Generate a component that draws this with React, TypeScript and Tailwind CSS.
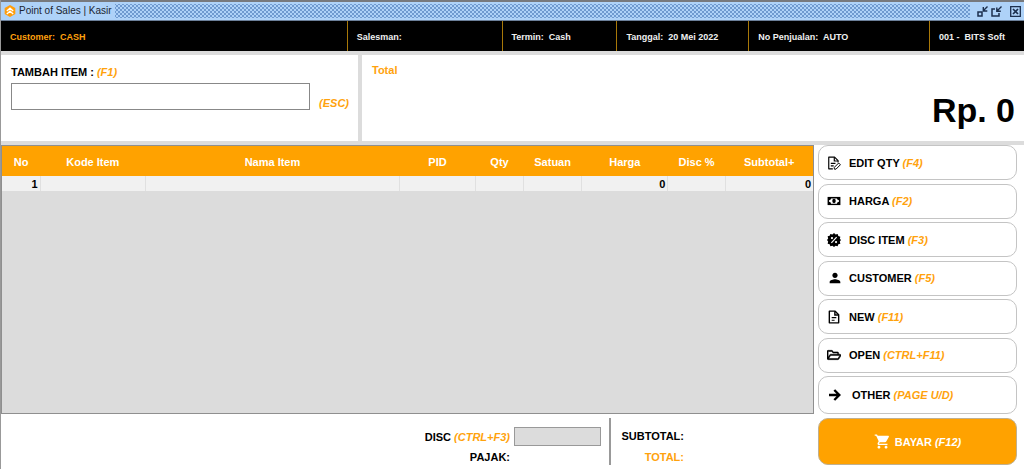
import React from "react";
import { FaRegFolderOpen } from "react-icons/fa";
import { MdPerson, MdShoppingCart } from "react-icons/md";

function FileLinesIcon() {
  return (
    <svg viewBox="0 0 24 24" className="size-[14px]" fill="none" stroke="currentColor" strokeWidth="2.400" aria-hidden="true">
      <path d="M14 2H4v20h16V8z" strokeLinejoin="round" />
      <path d="M13.500 2v6.500H20" />
      <path d="M8 13h8M8 17.500h5" strokeWidth="2" />
    </svg>
  );
}

function FileEditIcon() {
  return (
    <svg viewBox="0 0 24 24" className="size-[14px]" fill="none" stroke="currentColor" strokeWidth="2" aria-hidden="true">
      <path d="M10 22H3V2h10l6 6v3" strokeLinejoin="round" />
      <path d="M12.500 2v6.500H19" />
      <path d="M6.500 12.500h8M6.500 17h5" />
      <path d="M12.500 19.500l7.500-7.500 3 3-7.500 7.500h-3z" strokeWidth="1.700" />
    </svg>
  );
}

function CashIcon() {
  return (
    <svg viewBox="0 0 24 24" className="size-[14px]" aria-hidden="true">
      <rect x="1" y="5" width="22" height="14" fill="currentColor" />
      <path d="M7 7.500h10a3.500 3.500 0 0 0 3.500 3v3a3.500 3.500 0 0 0-3.500 3H7a3.500 3.500 0 0 0-3.500-3v-3A3.500 3.500 0 0 0 7 7.500z" fill="white" />
      <ellipse cx="12" cy="12" rx="3" ry="3.700" fill="currentColor" />
    </svg>
  );
}

function DiscountIcon() {
  return (
    <svg viewBox="0 0 24 24" className="size-[14px]" aria-hidden="true">
      <path
        d="M12 0l2.700 2.600 3.600-.9 1.100 3.500 3.500 1.100-.9 3.600L24 12l-2 2.700.9 3.600-3.500 1.100-1.100 3.500-3.600-.9L12 24l-2.700-2-3.600.9-1.100-3.500-3.500-1.100.9-3.600L0 12l2-2.700-.9-3.600 3.500-1.100L5.700 1.700l3.600.9z"
        fill="currentColor"
      />
      <path d="M7.500 17l9-10" stroke="white" strokeWidth="2" />
      <circle cx="8.500" cy="8.700" r="1.900" fill="white" />
      <circle cx="15.500" cy="15.500" r="1.900" fill="white" />
    </svg>
  );
}

function ArrowIcon() {
  return (
    <svg viewBox="0 0 12 12" className="size-3" fill="none" stroke="currentColor" strokeWidth="2.400" aria-hidden="true">
      <path d="M0 6h10M5.300 1l5 5-5 5" />
    </svg>
  );
}

function AppLogo() {
  return (
    <svg viewBox="0 0 12 12" className="size-3" aria-hidden="true">
      <path d="M6 0l5.300 3v6L6 12 .7 9V3z" fill="#ff9d0a" />
      <path d="M2.800 6L6 3.200 9.200 6M2.800 9L6 6.200 9.200 9" fill="none" stroke="white" strokeWidth="1.300" />
    </svg>
  );
}

function MinimizeIcon() {
  return (
    <svg viewBox="0 0 11 11" className="size-[11px]" fill="none" stroke="#1c2f4d" aria-hidden="true">
      <path d="M1 6h4v4H1z" strokeWidth="1.500" />
      <path d="M10.500 .5L6.500 4.500M6.300 1v4h4" strokeWidth="1.400" />
    </svg>
  );
}

function RestoreIcon() {
  return (
    <svg viewBox="0 0 11 11" className="size-[11px]" fill="none" stroke="#1c2f4d" aria-hidden="true">
      <path d="M4 3H1v7h7V7" strokeWidth="1.500" />
      <path d="M10.500 .5L6 5M5.800 1.500v3.800h4" strokeWidth="1.400" />
    </svg>
  );
}

function CloseIcon() {
  return (
    <svg viewBox="0 0 11 11" className="size-[11px]" fill="none" stroke="#1c2f4d" aria-hidden="true">
      <path d="M.7 .7h9.600v9.600H.7z" strokeWidth="1.300" />
      <path d="M3 3l5 5M8 3L3 8" strokeWidth="1.700" />
    </svg>
  );
}

const info = [
  "Customer:  CASH",
  "Salesman:",
  "Termin:  Cash",
  "Tanggal:  20 Mei 2022",
  "No Penjualan:  AUTO",
  "001 -  BITS Soft",
];

const columns = [
  { name: "No", width: "w-[4.7%]", value: "1" },
  { name: "Kode Item", width: "w-[13%]", value: "" },
  { name: "Nama Item", width: "w-[31.3%]", value: "" },
  { name: "PID", width: "w-[9.4%]", value: "" },
  { name: "Qty", width: "w-[5.9%]", value: "" },
  { name: "Satuan", width: "w-[7.2%]", value: "" },
  { name: "Harga", width: "w-[10.6%]", value: "0" },
  { name: "Disc %", width: "w-[7.1%]", value: "" },
  { name: "Subtotal+", width: "w-[10.8%]", value: "0" },
];

const actions = [
  { label: "EDIT QTY", hotkey: "(F4)", icon: <FileEditIcon /> },
  { label: "HARGA", hotkey: "(F2)", icon: <CashIcon /> },
  { label: "DISC ITEM", hotkey: "(F3)", icon: <DiscountIcon /> },
  { label: "CUSTOMER", hotkey: "(F5)", icon: <MdPerson className="size-4" /> },
  { label: "NEW", hotkey: "(F11)", icon: <FileLinesIcon /> },
  { label: "OPEN", hotkey: "(CTRL+F11)", icon: <FaRegFolderOpen className="size-[14px] stroke-black [stroke-width:20]" /> },
];

const actionClass = "flex shrink-0 items-center rounded-[10px] border border-[#c4c4c4] bg-white pl-2 text-left hover:bg-gray-50";

function Hotkey({ children }: { children: React.ReactNode }) {
  return <em className="text-[#ffa20d]">{children}</em>;
}

export default function App() {
  return (
    <div className="flex min-h-screen flex-col border-l border-[#999] bg-white font-['Liberation_Sans',Arial,sans-serif] text-[11px] leading-[14px] font-bold text-black">
      <header className="flex h-[21px] items-center gap-[3px] border-t-2 border-b border-t-[#77797d] border-b-[#6b7f99] bg-[#aed2f8] pr-[3px] pl-[3px]">
        <AppLogo />
        <h1 className="text-[10px] font-normal text-[#1c2530]">Point of Sales | Kasir</h1>
        <div className="h-[14px] flex-1 bg-[radial-gradient(circle,#6f9ad0_1px,transparent_1px),radial-gradient(circle,#6f9ad0_1px,transparent_1px)] bg-[length:4px_4px] bg-[position:0_0,2px_2px]" />
        <div className="flex items-center pl-1">
          <button aria-label="Minimize"><MinimizeIcon /></button>
          <button aria-label="Restore" className="ml-[3px]"><RestoreIcon /></button>
          <button aria-label="Close" className="ml-2"><CloseIcon /></button>
        </div>
      </header>

      <div className="grid h-[30px] grid-cols-[347fr_155fr_115fr_132fr_181fr_94fr] bg-black text-[9px] text-[#f0f0f0]">
        {info.map((text) => (
          <div key={text} className="flex items-center border-r border-[#a87808] pt-px pl-[9px] whitespace-pre first:text-[#ffa20d] last:border-r-0">
            {text}
          </div>
        ))}
      </div>

      <div className="grid h-[94px] grid-cols-[357fr_662fr] gap-1 border-y-4 border-[#dcdcdc] bg-[#dcdcdc]">
        <section className="bg-white pt-[10px] pr-[9px] pl-[10px]">
          <label htmlFor="item">
            TAMBAH ITEM : <Hotkey>(F1)</Hotkey>
          </label>
          <div className="mt-1 flex items-end gap-[9px]">
            <input id="item" className="h-[27px] min-w-0 flex-1 border border-[#888] bg-white px-1 outline-none" />
            <Hotkey>(ESC)</Hotkey>
          </div>
        </section>
        <section className="flex flex-col bg-white pt-2 pr-[9px] pl-[10px]">
          <h2 className="text-[#ffa20d]">Total</h2>
          <p className="mt-3 text-right text-[34px] leading-[42px]">Rp. 0</p>
        </section>
      </div>

      <main className="flex flex-1">
        <div className="flex min-w-0 flex-1 flex-col">
          <div className="flex-1 border border-[#8f8f8f] bg-[#dcdcdc]">
            <table className="w-full table-fixed border-collapse">
              <thead>
                <tr className="h-[30px] bg-[#ffa200] text-white">
                  {columns.map((c) => (
                    <th key={c.name} className={c.width + " p-0 pt-px"}>{c.name}</th>
                  ))}
                </tr>
              </thead>
              <tbody>
                <tr className="h-[15px] bg-[#f1f1f1] text-right">
                  {columns.map((c) => (
                    <td key={c.name} className="border-r border-[#e0e0e0] p-0 pr-[2px] last:border-r-0">{c.value}</td>
                  ))}
                </tr>
              </tbody>
            </table>
          </div>
          <footer className="flex h-[55px] justify-end pt-1">
            <div className="flex flex-col items-end gap-1 pt-[9px] pr-2">
              <div className="flex h-[19px] items-center gap-1">
                <label htmlFor="disc">DISC <Hotkey>(CTRL+F3)</Hotkey></label>
                <input id="disc" className="h-[19px] w-[87px] border border-[#999] bg-[#dcdcdc] px-1 outline-none" />
              </div>
              <span className="pr-[91px]">PAJAK:</span>
            </div>
            <div className="mb-1 w-[205px] border-l-2 border-[#999]">
              <div className="flex w-[73px] flex-col items-end gap-[7px] pt-[11px]">
                <span>SUBTOTAL:</span>
                <span className="text-[#ffa20d]">TOTAL:</span>
              </div>
            </div>
          </footer>
        </div>

        <aside className="flex w-[210px] flex-col gap-1 pr-[7px] pb-1 pl-1">
          <nav className="flex flex-1 flex-col justify-between">
            {actions.map((a) => (
              <button key={a.label} className={actionClass + " h-[35px]"}>
                <span className="flex w-[22px] items-center">{a.icon}</span>
                <span>{a.label} <Hotkey>{a.hotkey}</Hotkey></span>
              </button>
            ))}
            <button className={actionClass + " h-[38px]"}>
              <span className="flex w-[25px] items-center pl-[2px]"><ArrowIcon /></span>
              <span>OTHER <Hotkey>(PAGE U/D)</Hotkey></span>
            </button>
          </nav>
          <button className="flex h-[47px] items-center justify-center gap-1 rounded-[10px] border border-[#c0b090] bg-[#ffa200] text-white">
            <MdShoppingCart className="size-[17px]" />
            <span>BAYAR <em>(F12)</em></span>
          </button>
        </aside>
      </main>
    </div>
  );
}
